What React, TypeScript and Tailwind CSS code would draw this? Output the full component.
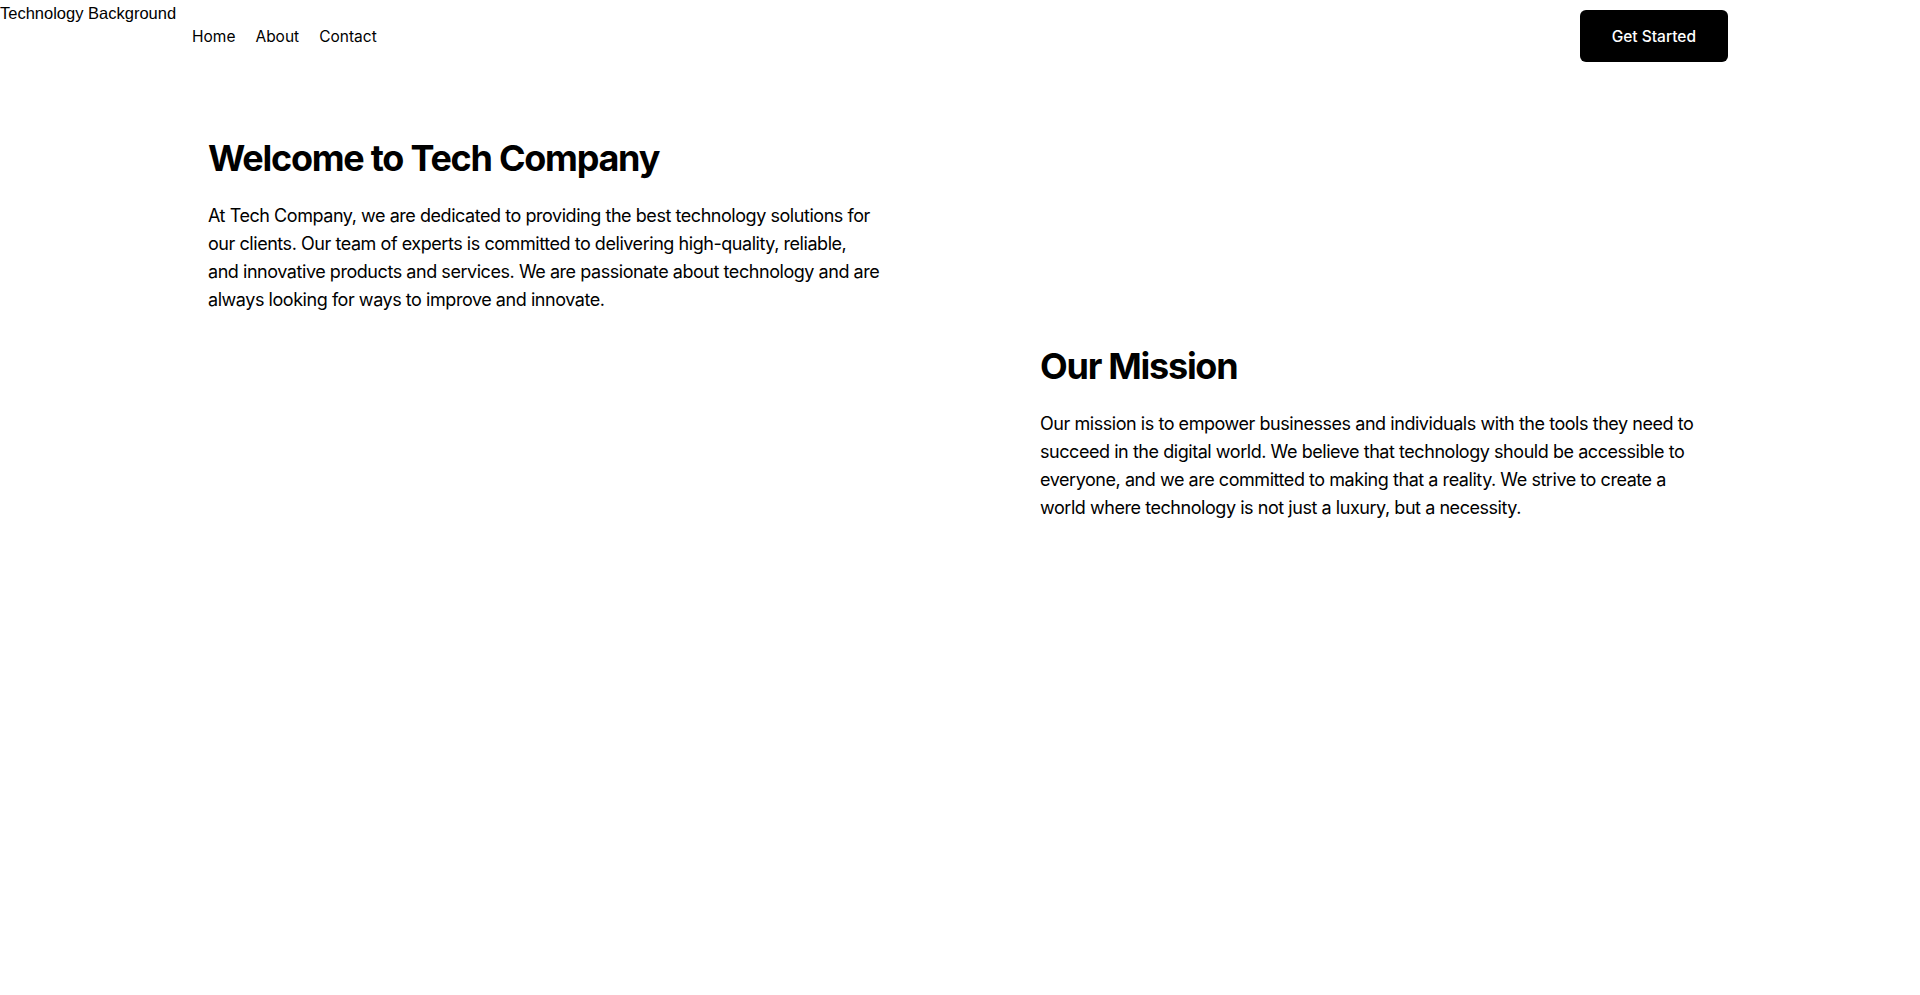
import React from 'react'

const font = { fontFamily: 'Inter, "Noto Sans", "Liberation Sans", sans-serif' }

function Header() {
  return (
    <header className="relative">
      {/* broken background image, only its alt text shows */}
      <span className="absolute left-0 top-px font-['Liberation_Sans',Arial,sans-serif] text-[16.5px] leading-6 text-black">
        Technology Background
      </span>
      <div className="mx-auto flex h-[72px] max-w-[1536px] items-center justify-between">
        <nav className="flex items-center gap-5 pt-0.5 text-[15.5px] leading-6 text-black">
          <a href="#">Home</a>
          <a href="#">About</a>
          <a href="#">Contact</a>
        </nav>
        <button className="rounded-md bg-black px-8 pt-[17px] pb-[15px] text-[15.5px] font-medium leading-5 text-white">
          Get Started
        </button>
      </div>
    </header>
  )
}

export default function App() {
  return (
    <div className="min-h-screen bg-white text-black" style={font}>
      <Header />
      <main className="mx-auto flex max-w-[1536px] flex-col gap-8 px-4 pt-[66px] pb-16">
        <section className="max-w-2xl">
          <h1 className="mb-6 text-4xl font-bold tracking-[-0.035em]">Welcome to Tech Company</h1>
          <p className="text-lg leading-7 tracking-[-0.025em]">
            At Tech Company, we are dedicated to providing the best technology solutions for our
            clients. Our team of experts is committed to delivering high-quality, reliable, and
            innovative products and services. We are passionate about technology and are always
            looking for ways to improve and innovate.
          </p>
        </section>
        <section className="ml-auto max-w-2xl">
          <h2 className="mb-6 text-4xl font-bold tracking-[-0.035em]">Our Mission</h2>
          <p className="text-lg leading-7 tracking-[-0.025em]">
            Our mission is to empower businesses and individuals with the tools they need to
            succeed in the digital world. We believe that technology should be accessible to
            everyone, and we are committed to making that a reality. We strive to create a world
            where technology is not just a luxury, but a necessity.
          </p>
        </section>
      </main>
    </div>
  )
}
